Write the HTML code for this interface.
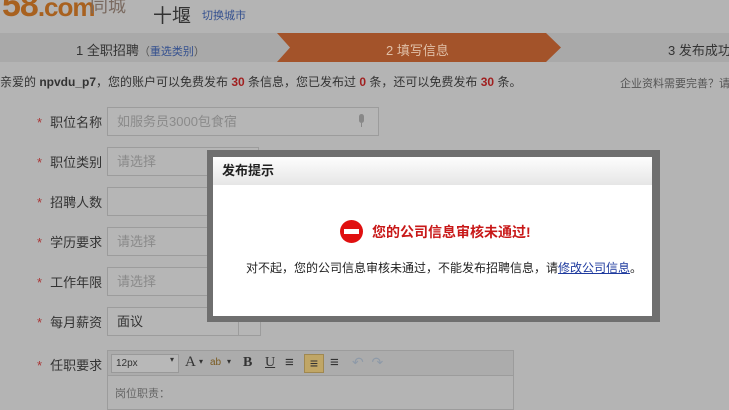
<!DOCTYPE html><html><head><meta charset="utf-8"><style>
*{margin:0;padding:0;box-sizing:border-box}
body{width:729px;height:400px;overflow:hidden;background:#b4b4b4;font-family:"Liberation Sans","Noto Sans CJK SC",sans-serif;font-size:12px;color:#333;position:relative}
.a{position:absolute;white-space:nowrap}
.inp{position:absolute;border:1px solid #9c9c9c;background:#b6b6b6;height:29px;color:#8a8a8a;font-size:13px;line-height:27px;padding-left:9px}
.lab{position:absolute;left:37px;font-size:13px;color:#333}
.lab b{color:#a33;font-weight:normal;margin-right:8px}
</style></head><body>
<div class="a" style="left:2px;top:-14px;font-size:34px;font-weight:bold;color:#a8611f;letter-spacing:-1px">58<span style="font-size:26px">.com</span></div>
<div class="a" style="left:90px;top:-8px;font-size:18px;color:#7a6a60">同城</div>
<div class="a" style="left:153px;top:1px;font-size:19px;color:#333">十堰</div>
<div class="a" style="left:202px;top:7px;font-size:11px;color:#34508f">切换城市</div>
<div class="a" style="left:0;top:33px;width:729px;height:29px;background:#a9a9a9"></div>
<svg class="a" style="left:274px;top:33px" width="290" height="29"><polygon points="3,0 272,0 287,14.5 272,29 3,29 16,14.5" fill="#a3532a"/></svg>
<div class="a" style="left:76px;top:40px;font-size:13px;color:#333">1 全职招聘<span style="font-size:11px;color:#555">（<span style="color:#34508f">重选类别</span>）</span></div>
<div class="a" style="left:386px;top:40px;font-size:13px;color:#e0c0a8">2 填写信息</div>
<div class="a" style="left:668px;top:40px;font-size:13px;color:#333">3 发布成功</div>
<div class="a" style="left:0;top:73px;font-size:12px">亲爱的 <b>npvdu_p7</b>，您的账户可以免费发布 <b style="color:#a02020">30</b> 条信息，您已发布过 <b style="color:#a02020">0</b> 条，还可以免费发布 <b style="color:#a02020">30</b> 条。</div>
<div class="a" style="left:620px;top:75px;font-size:11px;color:#555">企业资料需要完善？请点</div>
<div class="lab" style="top:112px"><b>*</b>职位名称</div>
<div class="inp" style="left:107px;top:107px;width:272px">如服务员3000包食宿</div>
<div class="a" style="left:359px;top:114px;width:5px;height:9px;background:#888;border-radius:3px"></div>
<div class="a" style="left:361px;top:123px;width:1px;height:4px;background:#888"></div>
<div class="lab" style="top:152px"><b>*</b>职位类别</div>
<div class="inp" style="left:107px;top:147px;width:152px">请选择</div>
<div class="lab" style="top:192px"><b>*</b>招聘人数</div>
<div class="inp" style="left:107px;top:187px;width:110px"></div>
<div class="lab" style="top:232px"><b>*</b>学历要求</div>
<div class="inp" style="left:107px;top:227px;width:110px">请选择</div>
<div class="lab" style="top:272px"><b>*</b>工作年限</div>
<div class="inp" style="left:107px;top:267px;width:110px">请选择</div>
<div class="lab" style="top:312px"><b>*</b>每月薪资</div>
<div class="inp" style="left:107px;top:307px;width:154px;color:#333">面议</div>
<div class="a" style="left:238px;top:307px;width:1px;height:29px;background:#9c9c9c"></div>
<div class="lab" style="top:355px"><b>*</b>任职要求</div>
<div class="a" style="left:107px;top:350px;width:407px;height:60px;border:1px solid #9c9c9c"></div>
<div class="a" style="left:108px;top:351px;width:405px;height:25px;background:#acacac;border-bottom:1px solid #9c9c9c"></div>
<div class="a" style="left:111px;top:354px;width:68px;height:19px;border:1px solid #999;background:#b8b8b8;font-size:10px;line-height:17px;padding-left:4px;color:#333">12px</div>
<div class="a" style="left:170px;top:355px;font-size:8px">▾</div>
<div class="a" style="left:185px;top:354px;font-size:15px;color:#333;font-family:'Liberation Serif',serif">A</div>
<div class="a" style="left:199px;top:357px;font-size:8px">▾</div>
<div class="a" style="left:210px;top:357px;font-size:10px;color:#7a5a20">ab</div>
<div class="a" style="left:227px;top:357px;font-size:8px">▾</div>
<div class="a" style="left:243px;top:355px;font-size:14px;font-weight:bold;font-family:'Liberation Serif',serif">B</div>
<div class="a" style="left:265px;top:355px;font-size:14px;text-decoration:underline;font-family:'Liberation Serif',serif">U</div>
<div class="a" style="left:285px;top:354px;font-size:15px">≡</div>
<div class="a" style="left:304px;top:354px;width:20px;height:19px;background:#c0a666;border:1px solid #a08850;font-size:14px;line-height:16px;text-align:center">≡</div>
<div class="a" style="left:330px;top:354px;font-size:15px">≡</div>
<div class="a" style="left:352px;top:354px;font-size:14px;color:#8e9aa8">↶&nbsp; ↷</div>
<div class="a" style="left:115px;top:385px;font-size:11px;color:#666">岗位职责：</div>
<div class="a" style="left:207px;top:150px;width:453px;height:172px;background:#6f6f6f"></div>
<div class="a" style="left:213px;top:157px;width:439px;height:159px;background:#fff"></div>
<div class="a" style="left:213px;top:157px;width:439px;height:28px;background:linear-gradient(#fdfdfd,#e6e6e6);font-size:13px;font-weight:bold;color:#222;line-height:28px;padding-left:9px">发布提示</div>
<div class="a" style="left:340px;top:220px;width:23px;height:23px;border-radius:50%;background:#e01010"></div>
<div class="a" style="left:344px;top:229px;width:15px;height:5px;background:#fff"></div>
<div class="a" style="left:372px;top:222px;font-size:14px;font-weight:bold;color:#c81818">您的公司信息审核未通过!</div>
<div class="a" style="left:246px;top:259px;font-size:12px;color:#222">对不起，您的公司信息审核未通过，不能发布招聘信息，请<span style="color:#1e3a9e;text-decoration:underline">修改公司信息</span>。</div>
</body></html>
